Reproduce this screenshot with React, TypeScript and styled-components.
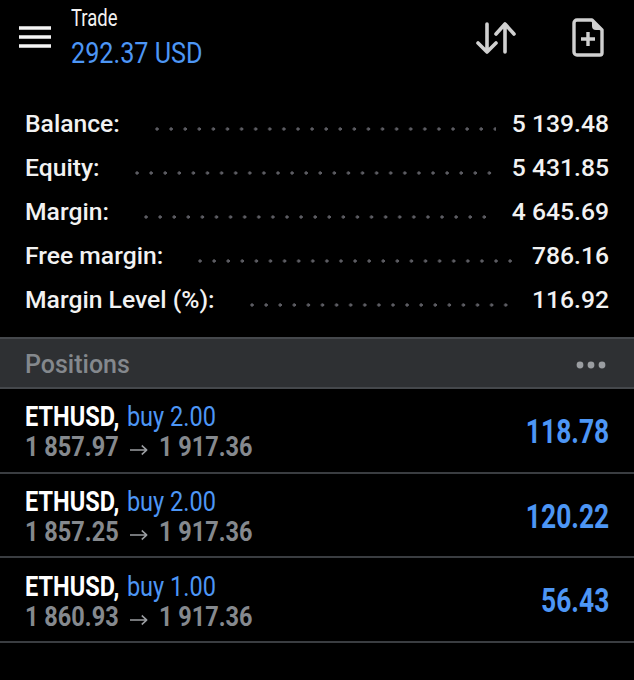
import React from 'react';
import styled, { createGlobalStyle } from 'styled-components';

const GlobalStyle = createGlobalStyle`
  html, body {
    margin: 0;
    padding: 0;
    background: #000;
    font-family: Roboto, "Liberation Sans", sans-serif;
  }
`;

const Page = styled.div`
  width: 634px;
  height: 680px;
  background: #000;
  overflow: hidden;
`;

const Toolbar = styled.header`
  display: flex;
  align-items: center;
  height: 88px;
  padding: 0 30px 0 19px;
  box-sizing: border-box;
`;

const Burger = styled.svg`
  width: 32px;
  height: 22px;
  margin-right: 20px;
  margin-bottom: 14px;
`;

const TitleBlock = styled.div`
  flex: 1;
  display: flex;
  flex-direction: column;
  gap: 3px;
  margin-bottom: 15px;
`;

const Squeezed = styled.span<{ $size: number; $color: string; $stretch?: number }>`
  display: block;
  font-size: ${(p) => p.$size}px;
  color: ${(p) => p.$color};
  transform: scaleX(${(p) => p.$stretch ?? 0.84});
  transform-origin: left center;
  white-space: nowrap;
`;

const SortIcon = styled.svg`
  width: 40px;
  height: 32px;
  margin-bottom: 12px;
`;

const NewOrderIcon = styled.svg`
  width: 32px;
  height: 39px;
  margin-left: 56px;
  margin-bottom: 13px;
`;

const Summary = styled.section`
  display: flex;
  flex-direction: column;
  padding: 13px 25px 0;
  height: 249px;
  box-sizing: border-box;
`;

const SummaryRow = styled.div`
  display: flex;
  align-items: center;
  height: 44px;
  font-size: 24.7px;
  font-weight: 500;
  color: #f2f2f2;
`;

const Leader = styled.div`
  flex: 1;
  height: 4px;
  margin: 12px 16px 0 35px;
  background-image: radial-gradient(circle at 2px 2px, #5c5c62 1.4px, transparent 1.9px);
  background-size: 14.1px 4px;
  background-repeat: repeat-x;
`;

const SectionBar = styled.div`
  display: flex;
  align-items: center;
  justify-content: space-between;
  height: 52px;
  padding: 3px 28px 0 25px;
  box-sizing: border-box;
  background: #2e3033;
  border-top: 2px solid #45484c;
  border-bottom: 2px solid #45484c;
  font-size: 25px;
  font-weight: 500;
  color: #84888d;
`;

const MoreDots = styled.svg`
  width: 30px;
  height: 8px;
`;

const PositionRow = styled.div`
  display: flex;
  align-items: center;
  justify-content: space-between;
  height: 84.7px;
  padding: 4px 25px 0;
  box-sizing: border-box;
  border-bottom: 2px solid #3a3d41;
`;

const PositionInfo = styled.div`
  display: flex;
  flex-direction: column;
  line-height: 30px;
`;

const Symbol = styled.span`
  font-weight: 700;
  color: #fff;
`;

const Side = styled.span`
  margin-left: 2px;
  color: #4d96f5;
`;

const Prices = styled.span`
  display: inline-flex;
  align-items: center;
  color: #85898e;
  font-weight: 700;
`;

const PriceArrow = styled.svg`
  width: 21px;
  height: 12px;
  margin: 6px 13px 0 14px;
`;

const Profit = styled.div`
  margin-bottom: 2px;
  font-size: 33px;
  font-weight: 700;
  color: #4d96f5;
  transform: scaleX(0.8);
  transform-origin: right center;
`;

const summary = [
  ['Balance:', '5 139.48'],
  ['Equity:', '5 431.85'],
  ['Margin:', '4 645.69'],
  ['Free margin:', '786.16'],
  ['Margin Level (%):', '116.92'],
];

const positions = [
  { side: 'buy 2.00', from: '1 857.97', profit: '118.78' },
  { side: 'buy 2.00', from: '1 857.25', profit: '120.22' },
  { side: 'buy 1.00', from: '1 860.93', profit: '56.43' },
];

const App = () => (
  <Page>
    <GlobalStyle />
    <Toolbar>
      <Burger viewBox="0 0 32 22">
        <path d="M0 2h32M0 11h32M0 20h32" stroke="#f5f5f5" strokeWidth="3.4" />
      </Burger>
      <TitleBlock>
        <Squeezed $size={24} $stretch={0.77} $color="#f2f2f2">Trade</Squeezed>
        <Squeezed $size={30} $color="#4d96f5">292.37 USD</Squeezed>
      </TitleBlock>
      <SortIcon viewBox="0 0 40 32">
        <path
          d="M11 2v28M2 21l9 9 9-9M29 30V2M20 12l9-10 9 10"
          fill="none"
          stroke="#d0d0d0"
          strokeWidth="3.6"
          strokeLinecap="round"
          strokeLinejoin="round"
        />
      </SortIcon>
      <NewOrderIcon viewBox="0 0 32 39">
        <path
          d="M5 2h15l10 10v23a2 2 0 0 1-2 2H5a3 3 0 0 1-3-3V5a3 3 0 0 1 3-3z"
          fill="none"
          stroke="#d0d0d0"
          strokeWidth="3.4"
          strokeLinejoin="round"
        />
        <path d="M20 2l10 10h-6a4 4 0 0 1-4-4z" fill="#d0d0d0" />
        <path d="M9 21h14M16 14v14" stroke="#d0d0d0" strokeWidth="3.4" />
      </NewOrderIcon>
    </Toolbar>
    <Summary>
      {summary.map(([label, value]) => (
        <SummaryRow key={label}>
          <span>{label}</span>
          <Leader />
          <span>{value}</span>
        </SummaryRow>
      ))}
    </Summary>
    <SectionBar>
      Positions
      <MoreDots viewBox="0 0 30 8">
        <circle cx="4" cy="4" r="3.4" fill="#9a9da1" />
        <circle cx="15" cy="4" r="3.4" fill="#9a9da1" />
        <circle cx="26" cy="4" r="3.4" fill="#9a9da1" />
      </MoreDots>
    </SectionBar>
    {positions.map((p) => (
      <PositionRow key={p.from}>
        <PositionInfo>
          <Squeezed $size={28} $color="#fff">
            <Symbol>ETHUSD,</Symbol> <Side>{p.side}</Side>
          </Squeezed>
          <Squeezed $size={28} $color="#85898e">
            <Prices>
              {p.from}
              <PriceArrow viewBox="0 0 21 12">
                <path d="M0 6h20M14 1.5L20 6l-6 4.500" fill="none" stroke="#9a9da1" strokeWidth="1.6" />
              </PriceArrow>
              1 917.36
            </Prices>
          </Squeezed>
        </PositionInfo>
        <Profit>{p.profit}</Profit>
      </PositionRow>
    ))}
  </Page>
);

export default App;
